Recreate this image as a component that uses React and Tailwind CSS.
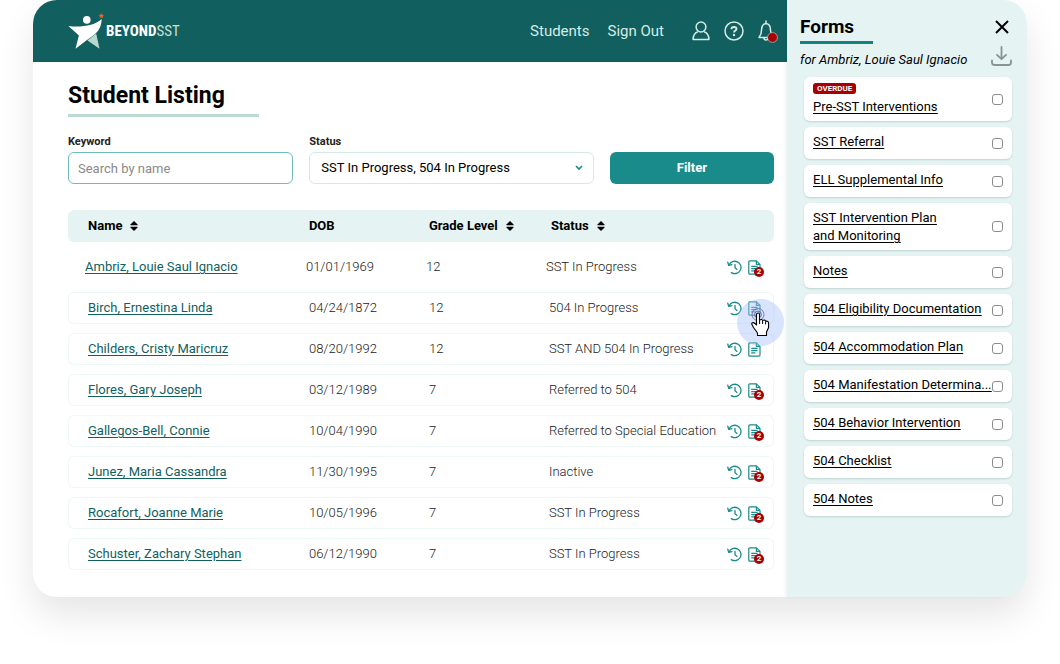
import React from "react";

const STUDENTS = [
  { name: "Ambriz, Louie Saul Ignacio", dob: "01/01/1969", grade: "12", status: "SST In Progress", count: 2 },
  { name: "Birch, Ernestina Linda", dob: "04/24/1872", grade: "12", status: "504 In Progress", pointer: true },
  { name: "Childers, Cristy Maricruz", dob: "08/20/1992", grade: "12", status: "SST AND 504 In Progress" },
  { name: "Flores, Gary Joseph", dob: "03/12/1989", grade: "7", status: "Referred to 504", count: 2 },
  { name: "Gallegos-Bell, Connie", dob: "10/04/1990", grade: "7", status: "Referred to Special Education", count: 2 },
  { name: "Junez, Maria Cassandra", dob: "11/30/1995", grade: "7", status: "Inactive", count: 2 },
  { name: "Rocafort, Joanne Marie", dob: "10/05/1996", grade: "7", status: "SST In Progress", count: 2 },
  { name: "Schuster, Zachary Stephan", dob: "06/12/1990", grade: "7", status: "SST In Progress", count: 2 },
];

const FORMS = [
  { id: "pre-sst", lines: ["Pre-SST Interventions"], overdue: true },
  { id: "referral", lines: ["SST Referral"] },
  { id: "ell", lines: ["ELL Supplemental Info"] },
  { id: "plan", lines: ["SST Intervention Plan", "and Monitoring"] },
  { id: "notes", lines: ["Notes"] },
  { id: "504-eligibility", lines: ["504 Eligibility Documentation"] },
  { id: "504-accommodation", lines: ["504 Accommodation Plan"] },
  { id: "504-manifestation", lines: ["504 Manifestation Determina..."] },
  { id: "504-behavior", lines: ["504 Behavior Intervention"] },
  { id: "504-checklist", lines: ["504 Checklist"] },
  { id: "504-notes", lines: ["504 Notes"] },
];

function LogoMark() {
  return (
    <svg width="36" height="37" viewBox="0 0 36 37" aria-hidden="true">
      <path d="M19.5 27.6 L28.2 20.5 L31.5 35.8 Z" fill="#b9d9cf" />
      <path
        d="M0.4 13 C13 14.6 27 12.5 33.7 6 C33.4 12.5 31.5 17 27.6 20.4 C25 22.8 21.5 25 18.6 27.2 L7.5 35.8 L10.9 22.4 Z"
        fill="#fff"
      />
      <circle cx="18.8" cy="6.9" r="3.8" fill="#fff" />
      <path d="M33.3 0 L34.2 1.8 L36 1.9 L34.7 3.2 L35.2 5.2 L33.3 4.2 L31.4 5.2 L31.9 3.2 L30.6 1.9 L32.4 1.8 Z" fill="#ff5a1f" />
    </svg>
  );
}

function UserIcon() {
  return (
    <svg width="18" height="20" viewBox="0 0 18 20" fill="none" stroke="currentColor" strokeWidth="1.5" aria-hidden="true">
      <circle cx="9" cy="6" r="4.9" />
      <path d="M5.8 10.8 C2.8 12 1.1 14.6 1.1 18.6 H16.9 C16.9 14.6 15.2 12 12.2 10.8" strokeLinejoin="round" />
    </svg>
  );
}

function HelpIcon() {
  return (
    <svg width="20" height="20" viewBox="0 0 20 20" fill="none" stroke="currentColor" strokeWidth="1.5" aria-hidden="true">
      <circle cx="10" cy="10" r="9" />
      <path d="M7.5 8.2 C7.5 6.7 8.5 6 10 6 C11.5 6 12.5 6.7 12.5 8 C12.5 9.6 10 9.6 10 11.6" strokeWidth="1.9" />
      <circle cx="10" cy="14" r="1.2" fill="currentColor" stroke="none" />
    </svg>
  );
}

function BellIcon() {
  return (
    <svg width="20" height="23" viewBox="0 0 20 23" fill="none" aria-hidden="true">
      <path
        d="M8 3.6 C5 4.1 3.6 6.4 3.6 9.4 C3.6 13.4 2.8 15 1 17.4 H15 C13.2 15 12.4 13.4 12.4 9.4 C12.4 6.4 11 4.1 8 3.6 Z M8 3.4 V1 M6 18 C6 20.6 10 20.6 10 18"
        stroke="currentColor" strokeWidth="1.5" strokeLinejoin="round" strokeLinecap="round"
      />
      <circle cx="14.5" cy="17.5" r="4.9" fill="#a80000" stroke="#c9e3da" strokeWidth="0.6" />
    </svg>
  );
}

function SortIcon() {
  return (
    <svg width="8" height="10" viewBox="0 0 8 10" fill="currentColor" aria-hidden="true">
      <path d="M4 0 L7.6 3.4 Q8 4.2 7.2 4.2 H0.8 Q0 4.2 0.4 3.4 Z M4 10 L0.4 6.6 Q0 5.8 0.8 5.8 H7.2 Q8 5.8 7.6 6.6 Z" />
    </svg>
  );
}

function HistoryIcon() {
  return (
    <svg width="15" height="15" viewBox="0 0 15 15" fill="none" stroke="currentColor" strokeWidth="1.3" strokeLinecap="round" strokeLinejoin="round" aria-hidden="true">
      <path d="M2 5.2 A6.2 6.2 0 1 1 4.3 12.6" />
      <path d="M0.8 2.2 L1.7 5.4 L4.9 4.7" />
      <path d="M8 4.4 V7.8 L10 9.4" />
    </svg>
  );
}

function DocumentIcon() {
  return (
    <svg width="13" height="15" viewBox="0 0 13 15" fill="none" stroke="currentColor" strokeWidth="1.2" strokeLinejoin="round" aria-hidden="true">
      <path d="M1.8 0.8 H8.4 L12 4.4 V13 Q12 14.2 10.8 14.2 H1.8 Q0.8 14.2 0.8 13 V1.8 Q0.8 0.8 1.8 0.8 Z" />
      <path d="M8.4 0.8 V4.4 H12 M3.2 6.4 H9.6 M3.2 8.6 H9.6 M3.2 10.8 H7.4" />
    </svg>
  );
}

function Pointer() {
  return (
    <span className="pointer-events-none absolute -top-[2px] left-[10px] z-10 h-[47px] w-[47px] rounded-full bg-[#a9c2fb]/45">
      <svg width="47" height="47" viewBox="0 0 47 47" fill="none" aria-hidden="true">
        <circle cx="21" cy="15.5" r="3.4" stroke="#5b5fa8" strokeWidth="0.9" />
        <circle cx="21" cy="15.5" r="6" stroke="#5b5fa8" strokeWidth="0.8" />
        <path
          d="M19.5 26 V15.5 Q19.5 14 21 14 Q22.5 14 22.5 15.5 V21 Q25 19.8 25.6 21.4 Q28 20.4 28.6 22.2 Q31.6 21.6 31.6 24.5 V28.5 L29.5 33 V36.5 H20.5 V34 L16.5 28.5 L14.8 25.2 Q14.6 23.4 16.4 23.6 Q17.8 24 19.5 26 Z"
          fill="#fff" stroke="#000" strokeWidth="1.1" strokeLinejoin="round"
        />
        <path d="M22.6 21 V25 M25.6 21.6 V25 M28.6 22.4 V25.4" stroke="#000" strokeWidth="1" />
      </svg>
    </span>
  );
}

function SortHeader({ label }) {
  return (
    <button type="button" className="flex items-center gap-2 font-bold">
      {label}
      <SortIcon />
    </button>
  );
}

function StudentRow({ student, plain }) {
  const edge = plain ? "border-transparent" : "border-[#eef8f7]";
  const cell = `border-y ${edge} py-0 pr-0 ${plain ? "pl-0" : "pl-[3px]"}`;
  return (
    <tr className="h-8">
      <td className={`rounded-l-md border-y border-l ${edge} py-0 pr-0 ${plain ? "pl-4" : "pl-[19px]"}`}>
        <a href="#student" className="font-normal text-[#115f5f] underline underline-offset-2">{student.name}</a>
      </td>
      <td className={cell}>{student.dob}</td>
      <td className={cell}>{student.grade}</td>
      <td className={`${cell} whitespace-nowrap`}>{student.status}</td>
      <td className={`rounded-r-md border-y border-r ${edge} p-0 text-[#1a8b8b]`}>
        <div className="relative flex items-center gap-[6px]">
          <button type="button" aria-label={`History for ${student.name}`}><HistoryIcon /></button>
          <button type="button" aria-label={`Forms for ${student.name}`} className="relative">
            <DocumentIcon />
            {student.count && (
              <span className="absolute left-[6px] top-[7px] flex h-[10px] w-[10px] items-center justify-center rounded-full bg-[#a80000] text-[8px] font-bold leading-none text-white">
                {student.count}
              </span>
            )}
          </button>
          {student.pointer && <Pointer />}
        </div>
      </td>
    </tr>
  );
}

function FormCard({ form }) {
  return (
    <li className="flex min-h-8 items-center justify-between rounded-md bg-white px-[9px] shadow-[0_1px_2px_rgba(0,60,60,0.18)]">
      <label htmlFor={form.id} className="flex flex-col items-start self-start pb-[5px] pt-[6px] text-[13px] leading-[18px] text-black">
        {form.overdue && (
          <span className="mb-1 rounded-[3px] bg-[#a80000] px-1 text-[8px] font-bold leading-[11px] text-white">OVERDUE</span>
        )}
        <a href="#form" className="whitespace-nowrap underline underline-offset-2">
          {form.lines.map((line) => (
            <span key={line} className="block underline underline-offset-2">{line}</span>
          ))}
        </a>
      </label>
      <input id={form.id} type="checkbox" className="h-[11px] w-[11px] shrink-0 appearance-none rounded-[3px] border border-[#8c8c8c] bg-white checked:bg-[#1a8b8b]" />
    </li>
  );
}

export default function App() {
  return (
    <div className="min-h-screen bg-white px-[33px] pb-16 font-[Roboto,'Liberation_Sans',sans-serif] text-[13px] leading-4 text-[#333]">
      <div className="flex rounded-[24px] bg-white shadow-[0_18px_36px_rgba(0,0,0,0.10)]">
        <div className="min-w-0 flex-1 pb-[18px]">
          <header className="flex h-[62px] items-center justify-between rounded-tl-[24px] bg-[#115f5f] pl-[35px] pr-[9px] text-[#d5ebe5]">
            <a href="#home" className="flex items-center gap-[2px] font-['Roboto_Condensed','Liberation_Sans_Narrow',sans-serif] text-[15px] font-bold text-white">
              <LogoMark />
              <span>BEYOND<span className="font-normal text-[#c3e0d7]">SST</span></span>
            </a>
            <nav className="flex items-center text-[15px]">
              <a href="#students" className="mr-[18px]">Students</a>
              <a href="#sign-out" className="mr-7">Sign Out</a>
              <div className="flex items-center gap-[14px]">
                <button type="button" aria-label="Account"><UserIcon /></button>
                <button type="button" aria-label="Help"><HelpIcon /></button>
                <button type="button" aria-label="Notifications"><BellIcon /></button>
              </div>
            </nav>
          </header>

          <main className="pl-[35px] pr-[13px] pt-5">
            <h1 className="inline-block w-[191px] border-b-[3px] border-[#bddbd1] pb-[5px] text-[23px] font-bold leading-[27px] text-black">
              Student Listing
            </h1>

            <form className="mt-[17px] flex items-end gap-4" onSubmit={(e) => e.preventDefault()}>
              <div className="flex flex-[225] flex-col gap-[2px]">
                <label htmlFor="keyword" className="text-[11px] font-bold text-[#222]">Keyword</label>
                <input id="keyword" type="text" placeholder="Search by name" className="h-8 w-full rounded-md border border-[#6fbcbc] px-[9px] placeholder:text-[#8a8a8a]" />
              </div>
              <div className="flex flex-[284] flex-col gap-[2px]">
                <label htmlFor="status" className="text-[11px] font-bold text-[#222]">Status</label>
                <div className="relative">
                  <select id="status" className="h-8 w-full appearance-none rounded-md border border-[#d3eae6] bg-white px-[11px] text-black">
                    <option>SST In Progress, 504 In Progress</option>
                  </select>
                  <svg className="pointer-events-none absolute right-[11px] top-[13px]" width="8" height="6" viewBox="0 0 8 6" fill="none" stroke="#1a8b8b" strokeWidth="1.6" aria-hidden="true">
                    <path d="M1 1 L4 4 L7 1" />
                  </svg>
                </div>
              </div>
              <button type="submit" className="h-8 flex-[164] rounded-md bg-[#1a8b8b] font-bold text-white">Filter</button>
            </form>

            <table className="mt-[17px] w-full table-fixed border-separate border-spacing-x-0 border-spacing-y-[9px] text-left">
              <colgroup>
                <col className="w-[33.7%]" />
                <col className="w-[17%]" />
                <col className="w-[17%]" />
                <col />
                <col className="w-[47px]" />
              </colgroup>
              <thead className="text-black">
                <tr className="h-8">
                  <th className="rounded-l-md bg-[#e5f4f3] p-0 pl-5"><SortHeader label="Name" /></th>
                  <th className="bg-[#e5f4f3] p-0 pl-[3px]">DOB</th>
                  <th className="bg-[#e5f4f3] p-0 pl-[3px]"><SortHeader label="Grade Level" /></th>
                  <th className="bg-[#e5f4f3] p-0 pl-[5px]"><SortHeader label="Status" /></th>
                  <th className="rounded-r-md bg-[#e5f4f3] p-0" aria-label="Actions" />
                </tr>
              </thead>
              <tbody className="font-light text-[#222]">
                {STUDENTS.map((student, i) => (
                  <StudentRow key={student.name} student={student} plain={i === 0} />
                ))}
              </tbody>
            </table>
          </main>
        </div>

        <aside className="w-[240px] shrink-0 rounded-r-[24px] bg-[#e5f4f3] pb-8 pl-[13px] pr-[15px] pt-4 text-black shadow-[-2px_0_3px_rgba(0,60,60,0.06)]">
          <div className="flex justify-between">
            <div>
              <h2 className="w-[73px] border-b-[3px] border-[#12837f] pb-[3px] text-[19px] font-bold leading-[22px]">Forms</h2>
              <p className="mt-2 whitespace-nowrap italic">for Ambriz, Louie Saul Ignacio</p>
            </div>
            <div className="flex w-[21px] flex-col items-center justify-between pb-[2px] pt-[4px]">
              <button type="button" aria-label="Close">
                <svg width="14" height="14" viewBox="0 0 14 14" stroke="#000" strokeWidth="2" aria-hidden="true"><path d="M1 1 L13 13 M13 1 L1 13" /></svg>
              </button>
              <button type="button" aria-label="Download">
                <svg width="21" height="20" viewBox="0 0 21 20" fill="none" stroke="#8b9392" strokeWidth="1.8" strokeLinecap="round" strokeLinejoin="round" aria-hidden="true">
                  <path d="M10.5 1 V13 M6 8.8 L10.5 13.2 L15 8.8 M1 14.5 V16.5 Q1 19 3.5 19 H17.5 Q20 19 20 16.5 V14.5" />
                </svg>
              </button>
            </div>
          </div>
          <ul className="ml-1 mt-[9px] flex flex-col gap-[6px]">
            {FORMS.map((form) => <FormCard key={form.id} form={form} />)}
          </ul>
        </aside>
      </div>
    </div>
  );
}
